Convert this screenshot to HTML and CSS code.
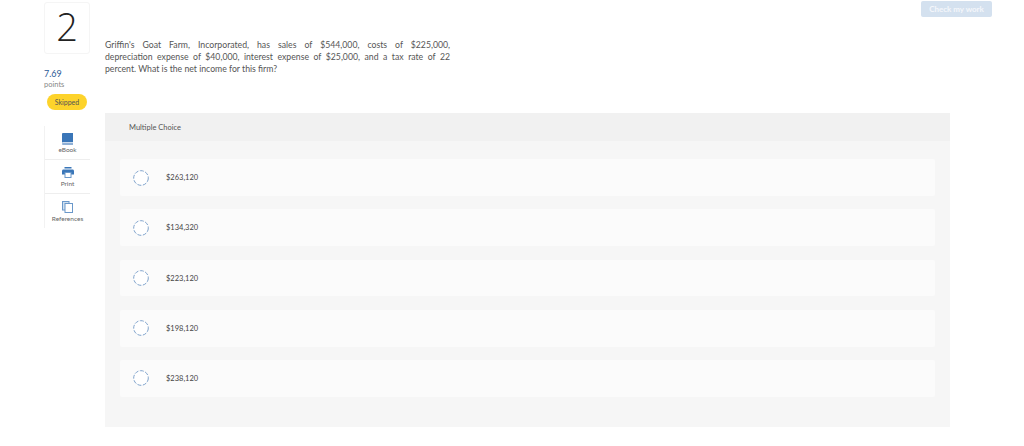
FILE: index.html
```html
<!DOCTYPE html>
<html lang="en">
<head>
<meta charset="utf-8">
<title>Question 2</title>
<link rel="stylesheet" href="styles.css">
</head>
<body>
<div class="page">
  <aside class="side">
    <div class="num">2</div>
    <div class="score">7.69</div>
    <div class="points">points</div>
    <div class="badge">Skipped</div>
    <nav class="tools">
      <div class="tool tool-ebook">
        <svg class="ico" width="11" height="12" viewBox="0 0 11 12"><path fill="#3a76b8" d="M0 1.200C0 .5.500 0 1.200 0H11v9.300H1.200C.9 9.300.5 9.400 0 9.700z"/><path fill="#8fb0d6" d="M0 10.500c.4-.3.800-.4 1.200-.4H11V12H1.200C.5 12 0 11.500 0 10.500z"/></svg>
        <span>eBook</span>
      </div>
      <div class="tool tool-print">
        <svg class="ico" width="12" height="11" viewBox="0 0 12 11"><rect x="2.500" y="0" width="7" height="1.500" fill="#3a76b8"/><path fill="#3a76b8" d="M0 4C0 3.200.6 2.500 1.500 2.500h9c.9 0 1.500.7 1.500 1.500v3.500H0z"/><rect x="3" y="5.500" width="6" height="5" fill="#fff" stroke="#6a98ca"/></svg>
        <span>Print</span>
      </div>
      <div class="tool tool-ref">
        <svg class="ico" width="11" height="12" viewBox="0 0 11 12"><rect x=".5" y=".5" width="6.500" height="8.500" fill="#cfe0f0" stroke="#6a98ca"/><rect x="3" y="2.500" width="7.500" height="9" fill="#fff" stroke="#6a98ca"/></svg>
        <span>References</span>
      </div>
    </nav>
  </aside>
  <main class="main">
    <p class="question">
      <span class="line">Griffin's Goat Farm, Incorporated, has sales of $544,000, costs of $225,000,</span>
      <span class="line">depreciation expense of $40,000, interest expense of $25,000, and a tax rate of 22</span>
      <span class="line line-last">percent. What is the net income for this firm?</span>
    </p>
    <section class="panel">
      <div class="panel-head">Multiple Choice</div>
      <div class="options">
        <div class="option"><svg class="radio" width="16" height="16" viewBox="0 0 16 16"><circle cx="8" cy="8" r="7.300"/></svg><span>$263,120</span></div>
        <div class="option"><svg class="radio" width="16" height="16" viewBox="0 0 16 16"><circle cx="8" cy="8" r="7.300"/></svg><span>$134,320</span></div>
        <div class="option"><svg class="radio" width="16" height="16" viewBox="0 0 16 16"><circle cx="8" cy="8" r="7.300"/></svg><span>$223,120</span></div>
        <div class="option"><svg class="radio" width="16" height="16" viewBox="0 0 16 16"><circle cx="8" cy="8" r="7.300"/></svg><span>$198,120</span></div>
        <div class="option"><svg class="radio" width="16" height="16" viewBox="0 0 16 16"><circle cx="8" cy="8" r="7.300"/></svg><span>$238,120</span></div>
      </div>
    </section>
  </main>
  <div class="actions"><button class="check" type="button">Check my work</button></div>
</div>
</body>
</html>
```
FILE: styles.css
```css
* { box-sizing: border-box; }
html, body { margin: 0; height: 100%; background: #fff; }
body { font-family: "Lato", "Liberation Sans", sans-serif; color: #333; overflow: hidden; }
.page { display: flex; width: 1024px; height: 446px; padding-left: 44px; }
.side { width: 46px; flex: none; display: flex; flex-direction: column; }
.num {
  width: 46px; height: 52px; margin-top: 2px;
  border: 1px solid #f5f5f5; border-radius: 3px;
  font-family: "Open Sans", sans-serif;
  font-size: 38px; font-weight: 300; line-height: 46px; text-align: center; color: #222;
}
.score { margin-top: 14px; font-size: 9px; line-height: 11px; color: #2a5a96; }
.points { margin-top: 1px; font-size: 7.500px; line-height: 9px; color: #888; }
.badge {
  width: 40px; height: 16px; margin: 5px 0 0 3px; border-radius: 8px;
  background: #fdd32b; color: #555; font-size: 7px; line-height: 16px; text-align: center;
}
.tools { margin-top: 16px; border-left: 1px solid #f2f2f2; }
.tool {
  height: 34px; display: flex; flex-direction: column; align-items: center;
  font-size: 6.500px; line-height: 8px; color: #666; border-bottom: 1px solid #eee;
  padding-top: 7px; gap: 1px;
}
.tool-print { gap: 2px; }
.tool-ref { border-bottom: 0; gap: 2px; }
.ico { flex: none; display: block; }
.main { width: 845px; flex: none; margin-left: 15px; display: flex; flex-direction: column; }
.question {
  margin: 39px 0 0; width: 345px; height: 38px; font-size: 8.700px; line-height: 12px; color: #555;
}
.line { display: block; text-align: justify; text-align-last: justify; white-space: nowrap; }
.line-last { text-align: left; text-align-last: left; }
.panel { margin-top: 36px; height: 314px; background: #f6f6f6; }
.panel-head { height: 28px; background: #f1f1f1; padding-left: 24px; font-size: 7.500px; line-height: 29px; color: #555; }
.options { padding: 18.300px 15px 0; display: flex; flex-direction: column; gap: 13.500px; }
.option {
  height: 36.700px; background: #fbfbfb; border-radius: 2px; display: flex; align-items: center;
  font-size: 7.500px; color: #444; padding-left: 13px;
}
.radio { margin-right: 17px; flex: none; }
.radio circle { fill: #fff; stroke: #7fa3cc; stroke-width: 1; stroke-dasharray: 4 1.500; }
.actions { margin-left: -29px; padding-top: 1px; }
.check {
  display: block; width: 71px; height: 16px; padding: 0; border: 0; border-radius: 2px;
  background: #d4e1ef; color: #f4f7fb; font: 700 8px "Lato", "Liberation Sans", sans-serif;
}
```
